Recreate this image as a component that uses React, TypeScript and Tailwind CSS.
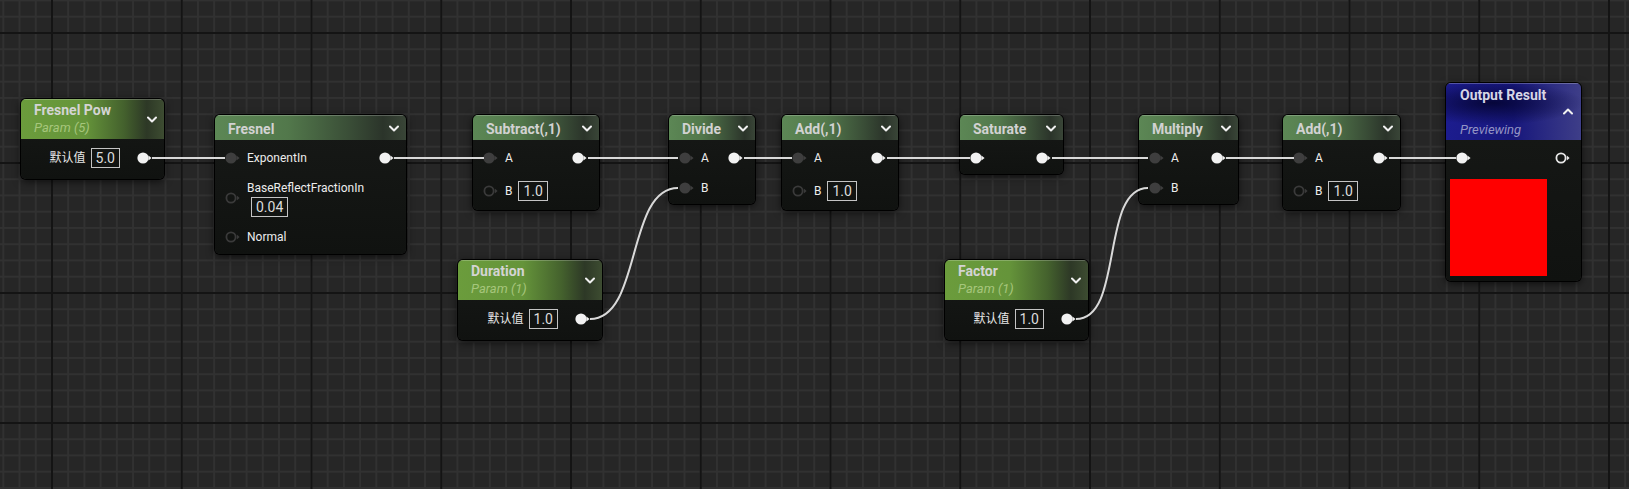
import type { ReactNode } from "react";

type PinKind = "in" | "inOpen" | "out" | "ring";

function Pin({ kind }: { kind: PinKind }) {
  const dark = "#3e3e3e";
  if (kind === "inOpen") {
    return (
      <svg width="16" height="12" viewBox="0 0 16 12" className="shrink-0">
        <circle cx="6" cy="6" r="4.6" fill="none" stroke="#3a3a3a" strokeWidth="1.8" />
        <path d="M11.8 3.6 L14.6 6 L11.8 8.4Z" fill="#3a3a3a" />
      </svg>
    );
  }
  if (kind === "ring") {
    return (
      <svg width="16" height="12" viewBox="0 0 16 12" className="shrink-0">
        <circle cx="6" cy="6" r="4.6" fill="none" stroke="#e8e8e8" strokeWidth="1.8" />
        <path d="M11.8 3.6 L14.6 6 L11.8 8.4Z" fill="#e8e8e8" />
      </svg>
    );
  }
  const fill = kind === "out" ? "#f2f2f2" : dark;
  return (
    <svg width="16" height="12" viewBox="0 0 16 12" className="shrink-0">
      <circle cx="6" cy="6" r="5.6" fill={fill} />
      <path d="M11.4 3.4 L14.6 6 L11.4 8.6Z" fill={fill} />
    </svg>
  );
}

function Chevron({ up = false }: { up?: boolean }) {
  return (
    <svg width="10" height="7" viewBox="0 0 10 7" className="shrink-0">
      <path
        d={up ? "M1 5.5 L5 1.5 L9 5.5" : "M1 1.5 L5 5.5 L9 1.5"}
        fill="none"
        stroke="#f0f0f0"
        strokeWidth="2"
        strokeLinecap="round"
        strokeLinejoin="round"
      />
    </svg>
  );
}

function ValueBox({ value }: { value: string }) {
  return (
    <span className="flex h-[20px] items-center border border-[#c4c4c4] px-[4px] text-[14px] leading-none text-[#dcdcdc]">
      {value}
    </span>
  );
}

const fnHeader =
  "bg-[linear-gradient(90deg,#5c8755_0%,#52784b_38%,#3a4e37_70%,#2b342a_88%,#394537_100%)]";
const paramHeader =
  "bg-[linear-gradient(90deg,#6b9c3c_0%,#65943a_45%,#44612d_72%,#2d3826_88%,#3d4c31_100%)]";
const outHeader =
  "bg-[radial-gradient(ellipse_90px_22px_at_35%_35%,#06063a,transparent),linear-gradient(90deg,#1c1c8e_0%,#17177c_50%,#3e3e88_100%)]";

const nodeShell =
  "absolute overflow-hidden rounded-[5px] bg-[linear-gradient(180deg,#171917,#101210)] ring-1 ring-black shadow-[0_2px_8px_rgba(0,0,0,0.7)]";

function FnNode({
  className,
  title,
  children,
}: {
  className: string;
  title: string;
  children: ReactNode;
}) {
  return (
    <div className={`${nodeShell} ${className}`}>
      <div
        className={`flex h-[25px] items-center justify-between pl-[13px] pr-[7px] pt-[2px] shadow-[inset_0_1px_0_rgba(255,255,255,0.22)] ${fnHeader}`}
      >
        <span className="text-[14px] font-bold leading-[18px] text-[#d2d2d2]">{title}</span>
        <Chevron />
      </div>
      <div className="flex flex-col gap-[6px] pb-[4px] pt-[6px]">{children}</div>
    </div>
  );
}

function ParamNode({
  className,
  title,
  sub,
  value,
}: {
  className: string;
  title: string;
  sub: string;
  value: string;
}) {
  return (
    <div className={`${nodeShell} ${className}`}>
      <div
        className={`flex h-[40px] items-center justify-between pl-[13px] pr-[7px] shadow-[inset_0_1px_0_rgba(255,255,255,0.22)] ${paramHeader}`}
      >
        <div className="flex flex-col">
          <span className="text-[14px] font-bold leading-[18px] text-[#d4d4d4]">{title}</span>
          <span className="text-[13px] italic leading-[18px] text-[#a6c67c]">{sub}</span>
        </div>
        <Chevron />
      </div>
      <div className="pb-[8px] pt-[6px]">
        <div className="flex h-[26px] items-center justify-end pr-[11px]">
          <span className="text-[12px] text-[#e6e6e6]">默认值</span>
          <span className="ml-[5px]">
            <ValueBox value={value} />
          </span>
          <span className="ml-[17px]">
            <Pin kind="out" />
          </span>
        </div>
      </div>
    </div>
  );
}

function InRow({
  kind,
  label,
  value,
  out,
  tall = false,
}: {
  kind: PinKind;
  label?: string;
  value?: string;
  out?: PinKind;
  tall?: boolean;
}) {
  return (
    <div
      className={`flex items-center justify-between pl-[10px] pr-[11px] ${tall ? "h-[30px]" : "h-[24px]"}`}
    >
      <div className="flex items-center gap-[6px]">
        <Pin kind={kind} />
        {label && <span className="text-[12px] leading-none text-[#ececec]">{label}</span>}
        {value && <ValueBox value={value} />}
      </div>
      {out && <Pin kind={out} />}
    </div>
  );
}

const wires = [
  "M152 158 L225 158",
  "M394 158 L484 158",
  "M588 158 L678 158",
  "M744 158 L792 158",
  "M887 158 L970 158",
  "M1052 158 L1148 158",
  "M1226 158 L1294 158",
  "M1389 158 L1456 158",
  "M590 319 C642 319 626 188 678 188",
  "M1076 319 C1124 319 1100 188 1148 188",
];

export default function App() {
  return (
    <div className="relative h-[489px] w-[1629px] overflow-hidden bg-[#262626] font-[Roboto,'Noto_Sans_CJK_SC',sans-serif] [background-image:linear-gradient(to_right,#141414_2px,transparent_2px),linear-gradient(to_bottom,#141414_2px,transparent_2px),linear-gradient(to_right,#313131_2px,transparent_2px),linear-gradient(to_bottom,#313131_2px,transparent_2px)] [background-position:51px_0,0_32px,51px_0,0_32px] [background-size:129.75px_130px,129.75px_130px,16.22px_16.25px,16.22px_16.25px]">
      <ParamNode className="left-[21px] top-[99px] w-[143px]" title="Fresnel Pow" sub="Param (5)" value="5.0" />

      <FnNode className="left-[215px] top-[115px] w-[191px]" title="Fresnel">
        <InRow kind="in" label="ExponentIn" out="out" />
        <div className="flex h-[43px] items-center pl-[10px]">
          <Pin kind="inOpen" />
          <div className="ml-[6px] flex flex-col pt-[2px]">
            <span className="text-[12px] leading-[16px] text-[#ececec]">BaseReflectFractionIn</span>
            <span className="ml-[4px] mt-[1px] self-start">
              <ValueBox value="0.04" />
            </span>
          </div>
        </div>
        <div className="pb-[1px]">
          <InRow kind="inOpen" label="Normal" />
        </div>
      </FnNode>

      <FnNode className="left-[473px] top-[115px] w-[126px]" title="Subtract(,1)">
        <InRow kind="in" label="A" out="out" />
        <InRow kind="inOpen" label="B" value="1.0" tall />
      </FnNode>

      <FnNode className="left-[669px] top-[115px] w-[86px]" title="Divide">
        <InRow kind="in" label="A" out="out" />
        <InRow kind="in" label="B" />
      </FnNode>

      <FnNode className="left-[782px] top-[115px] w-[116px]" title="Add(,1)">
        <InRow kind="in" label="A" out="out" />
        <InRow kind="inOpen" label="B" value="1.0" tall />
      </FnNode>

      <FnNode className="left-[960px] top-[115px] w-[103px]" title="Saturate">
        <InRow kind="out" out="out" />
      </FnNode>

      <FnNode className="left-[1139px] top-[115px] w-[99px]" title="Multiply">
        <InRow kind="in" label="A" out="out" />
        <InRow kind="in" label="B" />
      </FnNode>

      <FnNode className="left-[1283px] top-[115px] w-[117px]" title="Add(,1)">
        <InRow kind="in" label="A" out="out" />
        <InRow kind="inOpen" label="B" value="1.0" tall />
      </FnNode>

      <div className={`${nodeShell} left-[1446px] top-[83px] w-[135px]`}>
        <div
          className={`flex h-[57px] flex-col pl-[14px] pr-[8px] pt-[3px] shadow-[inset_0_1px_0_rgba(255,255,255,0.25)] ${outHeader}`}
        >
          <span className="text-[14px] font-bold leading-[18px] text-[#d6d6e6]">Output Result</span>
          <div className="flex h-[14px] items-center justify-end">
            <Chevron up />
          </div>
          <span className="mt-[3px] text-[13px] italic leading-[18px] text-[#9494c4]">Previewing</span>
        </div>
        <div className="flex flex-col pb-[5px] pt-[6px]">
          <div className="flex h-[24px] items-center justify-between pl-[10px] pr-[10px]">
            <Pin kind="out" />
            <Pin kind="ring" />
          </div>
          <div className="ml-[4px] mt-[9px] h-[97px] w-[97px] bg-[#ff0000]" />
        </div>
      </div>

      <ParamNode className="left-[458px] top-[260px] w-[144px]" title="Duration" sub="Param (1)" value="1.0" />
      <ParamNode className="left-[945px] top-[260px] w-[143px]" title="Factor" sub="Param (1)" value="1.0" />

      <svg className="pointer-events-none absolute inset-0 z-10" width="1629" height="489">
        {wires.map((d) => (
          <path key={d} d={d} fill="none" stroke="#d9d9d9" strokeWidth="2" />
        ))}
      </svg>
    </div>
  );
}
